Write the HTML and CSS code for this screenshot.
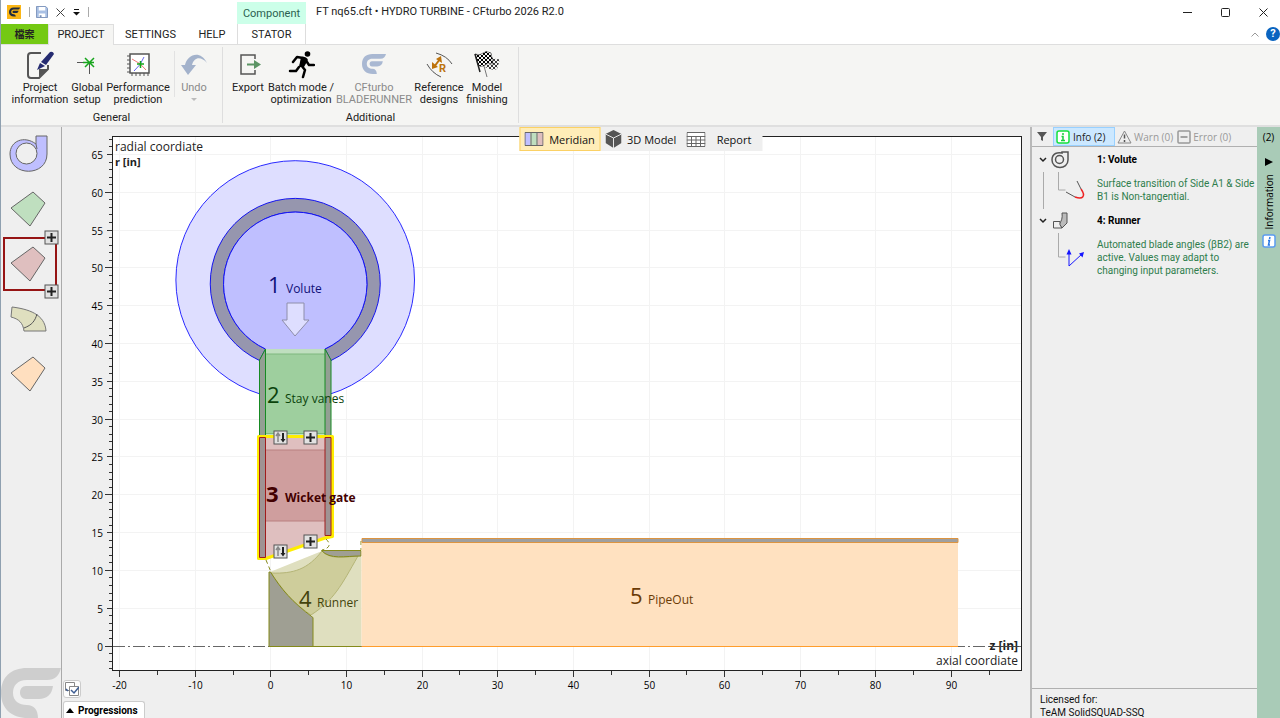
FILE: index.html
```
<!DOCTYPE html>
<html lang="en">
<head>
    <meta charset="UTF-8">
    <meta name="viewport" content="width=device-width, initial-scale=1">
    <title>FT nq65.cft - CFturbo</title>
    <link rel="stylesheet" href="styles.css">
</head>
<body>
    <svg class="defs" width="0" height="0">
        <symbol id="cf" viewBox="0 0 60 50">
            <path d="M60 0C58 8 54 12 46 12H26C16 12 12 18 12 25C12 33 18 37 26 37C33 37 37 42 37 50H27C10 50 0 40 0 25C0 9 10 0 26 0Z"/>
            <path d="M52 18C51 26 46 31 38 31H25C17 31 17 18 25 18Z"/>
        </symbol>
        <symbol id="plus" viewBox="0 0 15 15">
            <rect x="1" y="1" width="13" height="13" fill="#e2e2e2" stroke="#555"/>
            <path d="M7.500 3v9M3 7.500h9" stroke="#222" stroke-width="2"/>
        </symbol>
        <symbol id="swap" viewBox="0 0 15 15">
            <rect x="1" y="1" width="13" height="13" fill="#e2e2e2" stroke="#555"/>
            <path d="M5 12V4M3 6l2-3 2 3" fill="none" stroke="#888" stroke-width="1.500"/>
            <path d="M10 3v8" stroke="#222" stroke-width="2"/>
            <path d="M7.500 9h5L10 12.500z" fill="#222"/>
        </symbol>
    </svg>

    <header class="titlebar">
        <div class="quick">
            <svg class="logo" viewBox="0 0 14 14"><rect width="14" height="14" fill="#fbb616"/><use href="#cf" x="2" y="2" width="11" height="10" fill="#222b3c"/></svg>
            <span class="bar"></span>
            <button class="plain" aria-label="Save"><svg width="12" height="12" viewBox="0 0 13 13"><path d="M.5.5h10l2 2v10H.5z" fill="#a9c0e4" stroke="#7890b8"/><path d="M3 1h7v4H3zM3 8h7v4H3z" fill="#fff"/><path d="M4 10h2v2H4z" fill="#7890b8"/></svg></button>
            <button class="plain" aria-label="Close project"><svg width="9" height="9" viewBox="0 0 9 9"><path d="M.5.5l8 8M8.500.5l-8 8" stroke="#444"/></svg></button>
            <button class="plain" aria-label="More"><svg width="7" height="7" viewBox="0 0 7 7"><path d="M1 .5h5" stroke="#111"/><path d="M0 3h7L3.500 6.500z" fill="#111"/></svg></button>
            <span class="bar"></span>
        </div>
        <div class="context">Component</div>
        <div class="caption">FT nq65.cft • HYDRO TURBINE - CFturbo 2026 R2.0</div>
        <div class="window-buttons">
            <button class="plain" aria-label="Minimize"><svg width="9" height="9" viewBox="0 0 9 9"><path d="M0 4.500h9" stroke="#222"/></svg></button>
            <button class="plain" aria-label="Maximize"><svg width="9" height="9" viewBox="0 0 9 9"><rect x=".5" y=".5" width="8" height="8" rx="1" fill="none" stroke="#222"/></svg></button>
            <button class="plain" aria-label="Close"><svg width="9" height="9" viewBox="0 0 9 9"><path d="M.5.5l8 8M8.500.5l-8 8" stroke="#222"/></svg></button>
        </div>
    </header>

    <nav class="tabs">
        <button class="tab file">檔案</button>
        <button class="tab project">PROJECT</button>
        <button class="tab settings">SETTINGS</button>
        <button class="tab help">HELP</button>
        <button class="tab stator">STATOR</button>
        <div class="tabs-end">
            <button class="plain" aria-label="Collapse ribbon"><svg width="8" height="5" viewBox="0 0 8 5"><path d="M.5 4.500L4 1l3.500 3.500" fill="none" stroke="#999"/></svg></button>
            <button class="help-icon" aria-label="Help">?</button>
        </div>
    </nav>

    <div class="ribbon">
        <section class="group general">
            <div class="tools">
                <button class="tool w56">
                    <svg width="28" height="28" viewBox="0 0 28 28"><path d="M15 2H5Q2 2 2 5V24Q2 27 5 27H13L22 18V14" fill="none" stroke="#555" stroke-width="2"/><path d="M13 26V18H22z" fill="#555"/><path d="M15 11L24 1Q27 0 28 3L20 14z" fill="#252b70"/><path d="M14 12L19 15 11 19z" fill="#252b70"/></svg>
                    <span>Project<br>information</span>
                </button>
                <button class="tool w38">
                    <svg width="28" height="28" viewBox="0 0 28 28"><path d="M4 11.500H20M16.500 11V23" stroke="#555"/><path d="M12 7L21 16M21 7L12 16M10 11.500H21" stroke="#17a51c" stroke-width="1.500"/></svg>
                    <span>Global<br>setup</span>
                </button>
                <button class="tool w64">
                    <svg width="28" height="28" viewBox="0 0 28 28"><rect x="6" y="3" width="19" height="19" fill="#fff" stroke="#555" stroke-width="1.500"/><path d="M3 5h3M3 9h3M3 13h3M3 17h3M3 21h3M8 22v3M12 22v3M16 22v3M20 22v3M24 22v3" stroke="#555"/><path d="M8 8Q17 12 22 19" fill="none" stroke="#ef7777"/><path d="M10 20Q17 14 20 6" fill="none" stroke="#6565ef"/><path d="M13 13H20M16.500 10V17" stroke="#17a51c" stroke-width="1.500"/></svg>
                    <span>Performance<br>prediction</span>
                </button>
                <i class="tool-sep"></i>
                <button class="tool w38 dim">
                    <svg width="28" height="28" viewBox="0 0 28 28"><path d="M1 14H5C7 4 20-2 27 12C21 5 14 6 12 14H16L8 24z" fill="#a3b2cb"/></svg>
                    <span>Undo</span>
                    <i class="drop"></i>
                </button>
            </div>
            <h2>General</h2>
        </section>
        <section class="group additional">
            <div class="tools">
                <button class="tool w38">
                    <svg width="28" height="28" viewBox="0 0 28 28"><path d="M21 8V4H7V23H21V19" fill="none" stroke="#555" stroke-width="1.500"/><path d="M13 12.500H20V9L27 13.500 20 18V14.500H13z" fill="#5b9464"/></svg>
                    <span>Export</span>
                </button>
                <button class="tool w68">
                    <svg width="28" height="28" viewBox="0 0 28 28"><circle cx="20.500" cy="3" r="2.800"/><path d="M20 11l2 3h5M16 7L10 6 6 11M14 14L18 19 16 26M12 16L9 20H3" fill="none" stroke="#000" stroke-width="2.500" stroke-linecap="round" stroke-linejoin="round"/><path d="M14 6Q19 5 21 9L17 16 12 16z"/></svg>
                    <span>Batch mode /<br>optimization</span>
                </button>
                <button class="tool w78 dim">
                    <svg width="28" height="28" viewBox="0 0 28 28"><use href="#cf" x="2" y="3" width="24" height="20" fill="#a9b8d2"/></svg>
                    <span>CFturbo<br>BLADERUNNER</span>
                </button>
                <button class="tool w52">
                    <svg width="28" height="28" viewBox="0 0 28 28"><path d="M11 2Q22 5 27 13M2 13Q7 22 16 26" fill="none" stroke="#555"/><path d="M9 16L15 8" stroke="#bd730c" stroke-width="2"/><path d="M16 5l1 7-6-4zM7 18l0-7 6 5z" fill="#bd730c"/><text x="14" y="21" font-size="11" font-weight="bold" fill="#bd730c">R</text></svg>
                    <span>Reference<br>designs</span>
                </button>
                <button class="tool w44">
                    <svg width="28" height="28" viewBox="0 0 28 28"><defs><pattern id="check" width="4" height="4" patternUnits="userSpaceOnUse"><path d="M0 0h2v2H0zM2 2h2v2H2z"/></pattern></defs><path d="M2 3Q7 5 10 2T18 2L20 13Q15 11 12 14T5 14z" fill="url(#check)" stroke="#222" stroke-width=".5"/><path d="M18 6Q23 9 27 8L24 18Q19 20 12 16L13 14 20 13z" fill="url(#check)" opacity=".75"/><path d="M2 3L7 21" stroke="#222" stroke-width="1.500"/><path d="M11 15L14 26" stroke="#777"/></svg>
                    <span>Model<br>finishing</span>
                </button>
            </div>
            <h2>Additional</h2>
        </section>
    </div>

    <main class="workspace">
        <aside class="components">
            <button class="part" aria-label="Volute"><svg width="40" height="40" viewBox="0 0 40 40"><path d="M28 10V2H39V20C39 43 2 43 2 20C2 7 16 1 28 10z" fill="#bfbfff" stroke="#666"/><circle cx="18.500" cy="19.500" r="10.500" fill="#efefef" stroke="#666"/><path d="M28 10L29 15" stroke="#666"/></svg></button>
            <button class="part" aria-label="Stay vanes"><svg width="40" height="40" viewBox="0 0 40 40"><path d="M3 19L25 3 37 14 22 37z" fill="#bfdfbf" stroke="#666"/></svg></button>
            <button class="part selected" aria-label="Wicket gate"><svg width="40" height="40" viewBox="0 0 40 40"><path d="M3 19L25 3 37 14 22 37z" fill="#dfbfbf" stroke="#666"/></svg>
                <svg class="add top" width="15" height="15"><use href="#plus"/></svg>
                <svg class="add bottom" width="15" height="15"><use href="#plus"/></svg>
            </button>
            <button class="part" aria-label="Runner"><svg width="40" height="40" viewBox="0 0 40 40"><path d="M4 8C20 10 37 15 38 32H16C15 24 11 20 3 18z" fill="#dfdfbf" stroke="#777"/><path d="M29 15C27 22 24 26 16 29" fill="none" stroke="#555"/></svg></button>
            <button class="part" aria-label="PipeOut"><svg width="40" height="40" viewBox="0 0 40 40"><path d="M3 19L25 3 37 14 22 37z" fill="#ffdfbf" stroke="#666"/></svg></button>
            <svg class="brand" viewBox="0 0 60 50"><use href="#cf"/></svg>
        </aside>

        <section class="chart">
            <svg class="plot" viewBox="62 127 968 568" preserveAspectRatio="xMinYMin meet">
                <rect x="112" y="137" width="909" height="534" fill="#fff"/>
                <g id="grid" stroke="#f3f3f3"></g>
                <rect x="112.500" y="136.500" width="909" height="534" fill="none" stroke="#222"/>
                <g id="ticks" stroke="#333"></g>
                <g id="numbers" font-size="10"></g>
                <path d="M113 646.500H1021" stroke="#666" stroke-dasharray="12 3 2 3"/>

                <!-- volute -->
                <g stroke="#2a2aff">
                    <circle cx="295.200" cy="280" r="119.300" fill="#dedeff"/>
                    <path d="M259.500 360.500A85 85 0 1 1 331 360.500L325 349A71.700 71.700 0 1 0 265.500 349z" fill="#9696ae" stroke="#1414f0"/>
                    <path d="M265.500 349A71.700 71.700 0 1 1 325 349z" fill="#bfbfff" stroke="none"/>
                    <path d="M265.500 349A71.700 71.700 0 1 1 325 349" fill="none" stroke="#1414f0"/>
                </g>
                <path d="M287 303h17v17h5L295 336 282 320h5z" fill="#dedeff" stroke="#8e8eaa"/>

                <!-- stay vanes -->
                <path d="M265 349H325V436H265z" fill="#bfdfbf"/>
                <path d="M265 354H325V433H265z" fill="#9ecf9e"/>
                <path d="M265 354H325M265 433.500H325" stroke="#7eb87e"/>
                <path d="M265.500 349V436H259.500V360zM325 349V436H331V360z" fill="#939f93" stroke="#168a22"/>

                <!-- wicket gate -->
                <path d="M258.500 436.500H332.500V536.500L325 538 266 558.500H258.500z" fill="#dfbfbf" stroke="#ffed00" stroke-width="3" stroke-linejoin="round"/>
                <path d="M265 450H325V521H265z" fill="#cf9e9e"/>
                <path d="M265 450H325M265 521H325" stroke="#b98080"/>
                <path d="M259.500 437.500H265.500V557.500H259.500zM325 437.500H331V535.500H325z" fill="#9f9393" stroke="#a01c1c"/>
                <use href="#swap" x="273" y="430" width="15" height="15"/>
                <use href="#plus" x="303" y="430" width="15" height="15"/>
                <use href="#swap" x="273" y="544" width="15" height="15"/>
                <use href="#plus" x="303" y="534" width="15" height="15"/>

                <!-- runner -->
                <path d="M270 572L322 551H361.500V646H313V617z" fill="#dfdfbf"/>
                <path d="M271 573C294 574 308 569 322 551C330 560 345 557 358 556C341 586 334 600 311 615C293 603 282 589 271 573z" fill="#cecd9b" stroke="#b5b577"/>
                <path d="M269 572H270.500C281 589 292 602 313 617.500V646.500H269z" fill="#9f9f93" stroke="#858a1a"/>
                <path d="M321.500 550.500H361V556C345 556 330 560 321.500 550.500z" fill="#9f9f93" stroke="#858a1a"/>
                <path d="M269 646.500H361" stroke="#858a1a"/>
                <path d="M266 560L271 572M326 539Q334 547 322 550M361 541V550" fill="none" stroke="#858a1a" stroke-dasharray="4 3"/>

                <!-- outlet pipe -->
                <path d="M361.500 542H958V646H361.500z" fill="#ffe1c0"/>
                <path d="M362 538.500H958V542.500H362z" fill="#9f9f9f" stroke="#dd9440"/>
                <path d="M361.500 646.500H958" stroke="#ff9d2c"/>

                <g font-size="12">
                    <g fill="#101078"><text x="268" y="293" class="num">1</text><text x="286" y="293">Volute</text></g>
                    <g fill="#0b430b"><text x="267" y="403" class="num">2</text><text x="285" y="403">Stay vanes</text></g>
                    <g fill="#430000" font-weight="bold"><text x="266" y="502" class="num">3</text><text x="285" y="502">Wicket gate</text></g>
                    <g fill="#43430b"><text x="299" y="607" class="num">4</text><text x="317" y="607">Runner</text></g>
                    <g fill="#6b3b06"><text x="630" y="604" class="num">5</text><text x="648" y="604">PipeOut</text></g>
                </g>
                <g font-size="12" fill="#222">
                    <text x="115" y="151">radial coordiate</text>
                    <text x="115" y="166" font-size="11" font-weight="bold">r [in]</text>
                    <text x="1018" y="650" font-size="12" font-weight="bold" text-anchor="end">z [in]</text>
                    <text x="1018" y="665" text-anchor="end">axial coordiate</text>
                </g>
                <path d="M989 646.500H1019" stroke="#444"/>
            </svg>
            <div class="chart-foot">
                <button class="check-all" aria-label="Display options"><svg width="14" height="14" viewBox="0 0 14 14"><path d="M.5.5h9v8h-9z" fill="#fff" stroke="#888"/><path d="M4.500 4.500h9v9h-9z" fill="#fff" stroke="#888"/><path d="M1 7l2 2M6 8l3 3 5-6" fill="none" stroke="#405f94" stroke-width="1.500"/></svg></button>
                <button class="progressions"><svg width="8" height="5" viewBox="0 0 8 5"><path d="M0 5L4 0l4 5z"/></svg>Progressions</button>
            </div>
        </section>

        <div class="views">
            <button class="view on"><svg width="19" height="14" viewBox="0 0 19 14"><path d="M0 0h6v14H0z" fill="#bfbfff"/><path d="M6 0h7v14H6z" fill="#bfdfbf"/><path d="M13 0h6v14h-6z" fill="#dfbfbf"/><path d="M.5.5h18v13H.5zM6.500 0v14M12.500 0v14" fill="none" stroke="#666"/></svg><span>Meridian</span></button>
            <button class="view"><svg width="16" height="18" viewBox="0 0 16 18"><path d="M8 0l8 4v9l-8 5-8-5V4z" fill="#555"/><path d="M0 4l8 4 8-4M8 8v10" fill="none" stroke="#e5e5e5"/></svg><span>3D Model</span></button>
            <button class="view"><svg width="19" height="15" viewBox="0 0 19 15"><path d="M.5.5h18v14H.5zM0 4.500h19M0 8h19M0 11.500h19M5 4v11M9.500 4v11M14 4v11" fill="#fff" stroke="#666"/></svg><span>Report</span></button>
        </div>

        <aside class="messages">
            <div class="filters">
                <svg width="10" height="9" viewBox="0 0 10 9"><path d="M0 0h10L6 5v4L4 8V5z" fill="#555"/></svg>
                <button class="filter active"><svg width="14" height="14" viewBox="0 0 14 14"><rect x="1" y="1" width="12" height="12" rx="2" fill="#fff" stroke="#16e03c" stroke-width="1.500"/><path d="M7 3v2M5.500 6.500H7V10.500M5 10.500h4" fill="none" stroke="#16cf3c" stroke-width="1.500"/></svg>Info (2)</button>
                <button class="filter"><svg width="15" height="14" viewBox="0 0 15 14"><path d="M7.500 1L14 13H1z" fill="#eee" stroke="#888" stroke-linejoin="round"/><path d="M7.500 4.500v4M7.500 10v2" stroke="#555" stroke-width="1.500"/></svg>Warn (0)</button>
                <button class="filter"><svg width="14" height="14" viewBox="0 0 14 14"><rect x="1" y="1" width="12" height="12" rx="1" fill="#eee" stroke="#999" stroke-width="1.500"/><path d="M3.500 7h7" stroke="#888" stroke-width="1.500"/></svg>Error (0)</button>
            </div>
            <div class="tree">
                <div class="node">
                    <svg width="56" height="60" viewBox="0 0 56 60"><path d="M3 7l3 3 3-3" fill="none" stroke="#222" stroke-width="1.500"/><path d="M6.500 21v37M21.500 21v18h7" fill="none" stroke="#aaa"/><path d="M25 2V1H31V9C31 19 15 19 15 9C15 2 21 1 25 2z" fill="none" stroke="#555" stroke-width="1.500"/><circle cx="22.500" cy="8.500" r="4" fill="#efefef" stroke="#555" stroke-width="1.500"/><path d="M40 30L44 38M29 41L38 46" stroke="#555"/><path d="M44 38C49 45 46 49 38 46" fill="none" stroke="#e22" stroke-width="1.500"/></svg>
                    <div>
                        <h3>1: Volute</h3>
                        <p>Surface transition of Side A1 &amp; Side<br>B1 is Non-tangential.</p>
                    </div>
                </div>
                <div class="node">
                    <svg width="56" height="60" viewBox="0 0 56 60"><path d="M3 7l3 3 3-3" fill="none" stroke="#222" stroke-width="1.500"/><path d="M21.500 21v24h7" fill="none" stroke="#aaa"/><path d="M25 1H30V11L25 16 22 12Q26 8 25 1z" fill="#bbb" stroke="#555"/><path d="M16.500 9.500H23Q22 13 25 16H16.500z" fill="#efefef" stroke="#555"/><path d="M32 54V40M32 54L45 42" stroke="#1616ff"/><path d="M29.500 42.500L32 37l2.500 5.500zM47 40l-5 1.500 3.500 4z" fill="#1616ff"/></svg>
                    <div>
                        <h3>4: Runner</h3>
                        <p>Automated blade angles (βB2) are<br>active. Values may adapt to<br>changing input parameters.</p>
                    </div>
                </div>
            </div>
            <footer>Licensed for:<br>TeAM SolidSQUAD-SSQ</footer>
        </aside>

        <div class="side-tab">
            <span>(2)</span>
            <svg width="8" height="8" viewBox="0 0 8 8"><path d="M0 0l8 4-8 4z"/></svg>
            <span class="vertical">Information</span>
            <svg width="14" height="14" viewBox="0 0 14 14"><rect x="1" y="1" width="12" height="12" rx="2" fill="#fff" stroke="#5b9cf0" stroke-width="1.500"/><path d="M8 3l-.5 2M6 6.500h1.500L6.500 11H8" fill="none" stroke="#2a78e4" stroke-width="1.500"/></svg>
        </div>
    </main>

    <script>
        // axis scale: pixels per inch and the position of the origin
        var scale = 7.562, x0 = 271.4, y0 = 646.5;
        var grid = "", ticks = "", numbers = "";

        for (var z = -20; z <= 95; z += 5) {
            var x = Math.round(x0 + z * scale) - 0.5;
            var major = z % 10 === 0;
            ticks += `<path d="M${x} 671v${major ? 6 : 4}"/>`;
            if (major) {
                grid += `<path d="M${x} 137V670"/>`;
                numbers += `<text x="${x}" y="689" text-anchor="middle">${z}</text>`;
            }
        }
        for (var r = -3; r <= 67; r++) {
            var y = Math.round(y0 - r * scale) - 0.5;
            var len = r % 10 === 0 ? 7 : r % 5 === 0 ? 5 : 3;
            ticks += `<path d="M112 ${y}h-${len}"/>`;
            if (r % 5 === 0) {
                if (r > 0) grid += `<path d="M113 ${y}H1021"/>`;
                numbers += `<text x="103" y="${y + 4}" text-anchor="end">${r}</text>`;
            }
        }
        document.getElementById("grid").innerHTML = grid;
        document.getElementById("ticks").innerHTML = ticks;
        document.getElementById("numbers").innerHTML = numbers;
    </script>
</body>
</html>
```
FILE: styles.css
```
* {
    box-sizing: border-box;
}

body {
    margin: 0;
    height: 100vh;
    display: flex;
    flex-direction: column;
    overflow: hidden;
    border-left: 1px solid #8fa0b0;
    background: #fff;
    color: #222;
    font-family: Roboto, "Noto Sans", "Noto Sans CJK TC", sans-serif;
    font-size: 11px;
}

button {
    border: none;
    background: none;
    padding: 0;
    color: inherit;
    font: inherit;
}

svg {
    display: block;
    flex: none;
}

.defs {
    position: absolute;
}

/* Title bar */
.titlebar {
    display: flex;
    height: 24px;
}

.quick {
    display: flex;
    align-items: center;
    gap: 8px;
    width: 236px;
    padding-left: 6px;
}

.logo {
    width: 14px;
    height: 14px;
}

.bar {
    width: 1px;
    height: 10px;
    background: #aaa;
}

.quick .bar + .plain {
    margin-left: -2px;
}

.context {
    width: 69px;
    margin-top: 2px;
    line-height: 23px;
    text-align: center;
    background: #ccffe9;
    color: #2b5f50;
}

.caption {
    flex: 1;
    padding-left: 10px;
    line-height: 24px;
}

.window-buttons {
    display: flex;
    align-items: center;
    gap: 29px;
    padding-right: 12px;
}

/* Tabs */
.tabs {
    display: flex;
    height: 21px;
    border-bottom: 1px solid #dedede;
}

.tab {
    line-height: 21px;
    text-align: center;
}

.file {
    width: 47px;
    height: 20px;
    background: #74c913;
    font-weight: bold;
    font-size: 10px;
}

.project {
    width: 66px;
    height: 21px;
    border: 1px solid #dedede;
    border-bottom: none;
    background: #f5f5f3;
    line-height: 20px;
}

.settings {
    width: 73px;
}

.help {
    width: 50px;
}

.stator {
    width: 69px;
    border-left: 1px solid #ddd;
    border-right: 1px solid #ddd;
}

.tabs-end {
    display: flex;
    align-items: center;
    gap: 7px;
    margin-left: auto;
}

.help-icon {
    width: 14px;
    height: 14px;
    border-radius: 50%;
    background: #0a64c0;
    color: #fff;
    font-weight: bold;
    line-height: 14px;
}

/* Ribbon */
.ribbon {
    display: flex;
    height: 82px;
    padding-top: 2px;
    border-bottom: 2px solid #dfdfdf;
    background: #f5f5f3;
}

.group {
    height: 76px;
    border-right: 1px solid #dedede;
}

.general {
    width: 222px;
    padding-left: 11px;
}

.additional {
    width: 296px;
    padding-left: 6px;
}

.tools {
    display: flex;
    height: 62px;
    padding-top: 4px;
}

.tool {
    display: flex;
    flex-direction: column;
    align-items: center;
    justify-content: flex-start;
    height: 58px;
    line-height: 12px;
    text-align: center;
    white-space: nowrap;
}

.tool svg {
    margin-bottom: 3px;
}

.w38 { width: 38px; }
.w44 { width: 44px; }
.w52 { width: 52px; }
.w56 { width: 56px; }
.w64 { width: 64px; }
.w68 { width: 68px; }
.w78 { width: 78px; }

.dim {
    color: #8a8a8a;
}

.tool-sep {
    width: 1px;
    height: 46px;
    margin-left: 4px;
    background: #e2e2e2;
}

.drop {
    margin-top: 4px;
    border: 3px solid transparent;
    border-top-color: #bbb;
    border-bottom: none;
}

.group h2 {
    margin: 0;
    font-size: 11px;
    font-weight: normal;
    line-height: 17px;
    text-align: center;
}

.general h2 {
    margin-left: -11px;
}

.additional h2 {
    margin-left: -6px;
}

/* Workspace */
.workspace {
    position: relative;
    display: flex;
    flex: 1;
    min-height: 0;
    background: #efefef;
}

.components {
    display: flex;
    flex-direction: column;
    gap: 1px;
    width: 61px;
    border-right: 1px solid #aaa;
}

.part {
    position: relative;
    width: 54px;
    height: 54px;
    margin-left: 2px;
    padding-left: 5px;
}

.selected {
    border: 2px solid #961414;
    padding-left: 3px;
}

.add {
    position: absolute;
    right: -4px;
}

.top {
    top: -9px;
}

.bottom {
    bottom: -10px;
}

.brand {
    width: 60px;
    height: 50px;
    margin-top: auto;
    fill: #cecece;
}

.chart {
    position: relative;
    flex: 1;
    min-width: 0;
}

.plot {
    width: 100%;
    height: 100%;
    font-family: "Open Sans", "Noto Sans", sans-serif;
}

.num {
    font-size: 22px;
}

.chart-foot {
    position: absolute;
    left: 1px;
    bottom: 0;
}

.check-all {
    display: flex;
    align-items: center;
    justify-content: center;
    width: 18px;
    height: 18px;
    margin-bottom: 3px;
    border: 1px solid #ccc;
    border-radius: 3px;
    background: #fdfdfd;
}

.progressions {
    display: flex;
    align-items: center;
    gap: 4px;
    height: 17px;
    padding: 0 6px 0 2px;
    border: 1px solid #ccc;
    border-bottom: none;
    border-radius: 3px 3px 0 0;
    background: #fff;
    color: #000;
    font-size: 10px;
    font-weight: bold;
}

/* View switch on top of the chart */
.views {
    position: absolute;
    top: 0;
    left: 50%;
    display: flex;
    height: 24px;
    transform: translateX(-50%);
    background: #efefef;
    font-family: "Open Sans", "Noto Sans", sans-serif;
}

.view {
    display: flex;
    align-items: center;
    gap: 6px;
    width: 81px;
    padding: 0 4px;
    border: 1px solid transparent;
    color: #111;
    white-space: nowrap;
}

.view span {
    flex: 1;
    text-align: center;
}

.on {
    border-color: #fbd165;
    background: #ffedb8;
}

/* Message panel */
.messages {
    display: flex;
    flex-direction: column;
    width: 227px;
    border-left: 2px solid #b8b8b8;
}

.filters {
    display: flex;
    align-items: center;
    height: 20px;
    padding-left: 5px;
    border-bottom: 1px solid #b0b0b0;
}

.filter {
    display: flex;
    align-items: center;
    gap: 2px;
    height: 19px;
    padding: 0 2px;
    color: #999;
    font-family: "Open Sans", "Noto Sans", sans-serif;
    font-size: 10px;
    white-space: nowrap;
}

.active {
    gap: 3px;
    width: 62px;
    margin-left: 6px;
    border: 1px solid #99d1ff;
    background: #cce8ff;
    color: #222;
}

.tree {
    flex: 1;
    padding: 4px 0 0 5px;
}

.node {
    display: flex;
    gap: 4px;
    height: 61px;
}

.node h3 {
    margin: 0 0 9px;
    color: #000;
    font-size: 10px;
    line-height: 17px;
}

.node p {
    margin: 0;
    color: #2e7d4c;
    font-size: 10px;
    line-height: 13px;
    white-space: nowrap;
}

.messages footer {
    height: 30px;
    padding: 4px 8px;
    border-top: 1px solid #b0b0b0;
    color: #111;
    font-size: 10px;
    line-height: 13px;
}

.side-tab {
    display: flex;
    flex-direction: column;
    align-items: center;
    width: 23px;
    padding-top: 3px;
    background: #a9cbb7;
    color: #000;
    font-family: "Open Sans", "Noto Sans", sans-serif;
    font-size: 10px;
}

.side-tab span + svg {
    margin-top: 14px;
}

.side-tab .vertical + svg {
    margin-top: 5px;
}

.vertical {
    margin-top: 8px;
    writing-mode: vertical-rl;
    transform: rotate(180deg);
}
```
